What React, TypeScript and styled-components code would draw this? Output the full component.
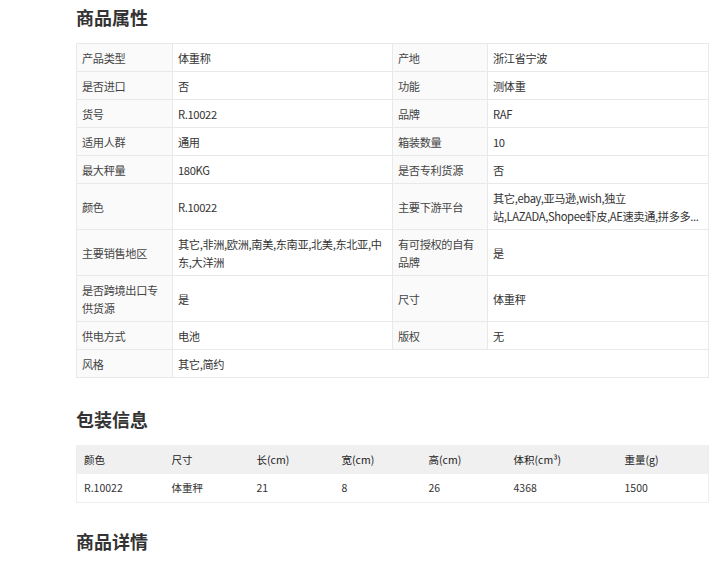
import React from "react";
import styled, { createGlobalStyle } from "styled-components";

const Global = createGlobalStyle`
  html, body { margin: 0; padding: 0; background: #fff; }
  body { font-family: "Noto Sans CJK SC", "Noto Sans", sans-serif; color: #333; }
`;

const Page = styled.div`
  padding: 0 0 0 76px;
  width: 632px;
`;

const Title = styled.h2<{ $top: number }>`
  margin: ${(p) => p.$top}px 0 14px;
  font-size: 18px;
  line-height: 24px;
  font-weight: 700;
  color: #333;
`;

const AttrTable = styled.table`
  width: 632px;
  border-collapse: collapse;
  table-layout: fixed;
  font-size: 11.2px;
  letter-spacing: -0.35px;
  line-height: 18px;
  color: #333;
`;

const Cell = styled.td<{ $label?: boolean }>`
  border: 1px solid #e9e9e9;
  padding: 4.5px 5px;
  vertical-align: middle;
  background: ${(p) => (p.$label ? "#fafafa" : "#fff")};
  color: ${(p) => (p.$label ? "#444" : "#333")};
  overflow-wrap: break-word;
`;

const Clamp = styled.div`
  display: -webkit-box;
  -webkit-line-clamp: 2;
  -webkit-box-orient: vertical;
  overflow: hidden;
`;

const PkgTable = styled.table`
  width: 632px;
  border-collapse: collapse;
  table-layout: fixed;
  font-size: 10.5px;
  line-height: 16px;
  color: #333;
  border: 1px solid #eee;
  border-top: none;
`;

const Th = styled.th`
  background: #f0f0f0;
  font-weight: 400;
  text-align: left;
  padding: 6.5px 7px;
  color: #222;
`;

const Td = styled.td`
  padding: 6px 7px;
  background: #fff;
`;

type Pair = [string, React.ReactNode];
const rows: Pair[][] = [
  [["产品类型", "体重称"], ["产地", "浙江省宁波"]],
  [["是否进口", "否"], ["功能", "测体重"]],
  [["货号", "R.10022"], ["品牌", "RAF"]],
  [["适用人群", "通用"], ["箱装数量", "10"]],
  [["最大秤量", "180KG"], ["是否专利货源", "否"]],
  [
    ["颜色", "R.10022"],
    ["主要下游平台", <Clamp>其它,ebay,亚马逊,wish,独立站,LAZADA,Shopee虾皮,AE速卖通,拼多多...</Clamp>],
  ],
  [["主要销售地区", "其它,非洲,欧洲,南美,东南亚,北美,东北亚,中东,大洋洲"], ["有可授权的自有品牌", "是"]],
  [["是否跨境出口专供货源", "是"], ["尺寸", "体重秤"]],
  [["供电方式", "电池"], ["版权", "无"]],
];

const pkgHead = ["颜色", "尺寸", "长(cm)", "宽(cm)", "高(cm)", "体积(cm³)", "重量(g)"];
const pkgRow = ["R.10022", "体重秤", "21", "8", "26", "4368", "1500"];
const pkgWidths = [88, 85, 85, 87, 85, 111, 91];

export default function App() {
  return (
    <Page>
      <Global />
      <Title $top={5}>商品属性</Title>
      <AttrTable>
        <colgroup>
          <col style={{ width: 96 }} />
          <col style={{ width: 220 }} />
          <col style={{ width: 95 }} />
          <col style={{ width: 221 }} />
        </colgroup>
        <tbody>
          {rows.map((r, i) => (
            <tr key={i}>
              {r.map(([k, v], j) => (
                <React.Fragment key={j}>
                  <Cell $label>{k}</Cell>
                  <Cell>{v}</Cell>
                </React.Fragment>
              ))}
            </tr>
          ))}
          <tr>
            <Cell $label>风格</Cell>
            <Cell colSpan={3}>其它,简约</Cell>
          </tr>
        </tbody>
      </AttrTable>
      <Title $top={29}>包装信息</Title>
      <PkgTable>
        <colgroup>
          {pkgWidths.map((w, i) => (
            <col key={i} style={{ width: w }} />
          ))}
        </colgroup>
        <thead>
          <tr>
            {pkgHead.map((h) => (
              <Th key={h}>{h}</Th>
            ))}
          </tr>
        </thead>
        <tbody>
          <tr>
            {pkgRow.map((c, i) => (
              <Td key={i}>{c}</Td>
            ))}
          </tr>
        </tbody>
      </PkgTable>
      <Title $top={26}>商品详情</Title>
    </Page>
  );
}
